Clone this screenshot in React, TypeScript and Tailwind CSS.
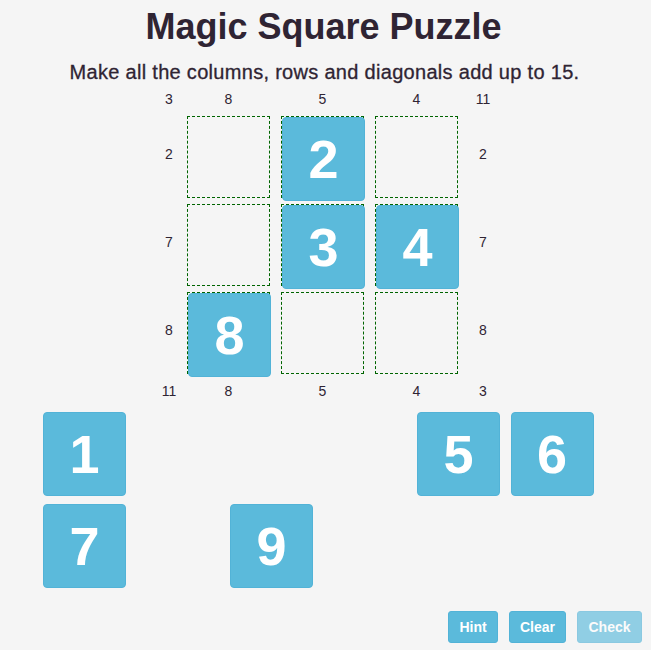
import React from "react";

// board: index = row * 3 + col, null = empty drop zone
const BOARD: (number | null)[] = [null, 2, null, null, 3, 4, 8, null, null];
const TOP = ["3", "8", "5", "4", "11"];
const BOTTOM = ["11", "8", "5", "4", "3"];
const ROWS = ["2", "7", "8"];
// tray slots, tiles already placed on the board leave a gap
const TRAY: (number | null)[] = [1, null, null, null, 5, 6, 7, null, 9];

function Tile({ n }: { n: number }) {
  return (
    <div className="w-[83px] h-[84px] rounded-[4px] bg-[#5bbadb] border border-[#52b3d7] flex items-center justify-center text-white font-bold text-[54px] leading-none select-none">
      {n}
    </div>
  );
}

function LabelRow({ labels, top }: { labels: string[]; top?: boolean }) {
  return (
    <div className={`flex text-[14px] leading-[22px] ${top ? "h-[28px] items-start" : "h-[22px] items-center"}`}>
      <div className="w-[36px] text-center">{labels[0]}</div>
      <div className="w-[94px]"><div className="w-[83px] text-center">{labels[1]}</div></div>
      <div className="w-[94px]"><div className="w-[83px] text-center">{labels[2]}</div></div>
      <div className="w-[88px]"><div className="w-[83px] text-center">{labels[3]}</div></div>
      <div className="w-[40px] text-center">{labels[4]}</div>
    </div>
  );
}

export default function App() {
  return (
    <div className="min-h-screen w-full bg-[#f5f5f5] text-[#2f2433] font-['Liberation_Sans',Arial,sans-serif]">
      <h1 className="pt-[7px] pr-[4px] text-center text-[36px] leading-[40px] font-bold">Magic Square Puzzle</h1>
      <p className="mt-[13px] pr-[2px] text-center text-[20px] leading-[24px] tracking-[0.3px] [-webkit-text-stroke:0.3px_#2f2433]">
        Make all the columns, rows and diagonals add up to 15.
      </p>

      <div className="mt-[4px] ml-[151px] w-[352px]">
        <LabelRow labels={TOP} top />
        {ROWS.map((label, r) => (
          <div key={r} className="flex h-[88px] items-start">
            <div className="w-[36px] h-[82px] flex items-center justify-center text-[14px] pb-[6px]">{label}</div>
            {[0, 1, 2].map((c) => {
              const v = BOARD[r * 3 + c];
              return (
                <div key={c} className={c < 2 ? "w-[94px]" : "w-[88px]"}>
                  <div className="relative w-[83px] h-[82px] border border-dashed border-[#006400]">
                    {v !== null && (
                      <div className="absolute left-[0px] top-[0px]">
                        <Tile n={v} />
                      </div>
                    )}
                  </div>
                </div>
              );
            })}
            <div className="w-[40px] h-[82px] flex items-center justify-center text-[14px] pb-[6px]">{label}</div>
          </div>
        ))}
        <LabelRow labels={BOTTOM} />
      </div>

      <div className="mt-[10px] ml-[43px] grid grid-cols-[repeat(6,83px)] gap-x-[10.5px] gap-y-[8px]">
        {TRAY.map((v, i) => (
          <div key={i} className="h-[84px]">
            {v !== null && <Tile n={v} />}
          </div>
        ))}
      </div>

      <div className="mt-[23px] pr-[9px] flex justify-end gap-[11px]">
        <button className="h-[32px] w-[50px] rounded-[3px] bg-[#5bbadb] border border-[#52b3d7] text-white text-[14px] font-bold">
          Hint
        </button>
        <button className="h-[32px] w-[57px] rounded-[3px] bg-[#5bbadb] border border-[#52b3d7] text-white text-[14px] font-bold">
          Clear
        </button>
        <button disabled className="h-[32px] w-[65px] rounded-[3px] bg-[#5bbadb] border border-[#52b3d7] text-white text-[14px] font-bold opacity-65">
          Check
        </button>
      </div>
    </div>
  );
}
